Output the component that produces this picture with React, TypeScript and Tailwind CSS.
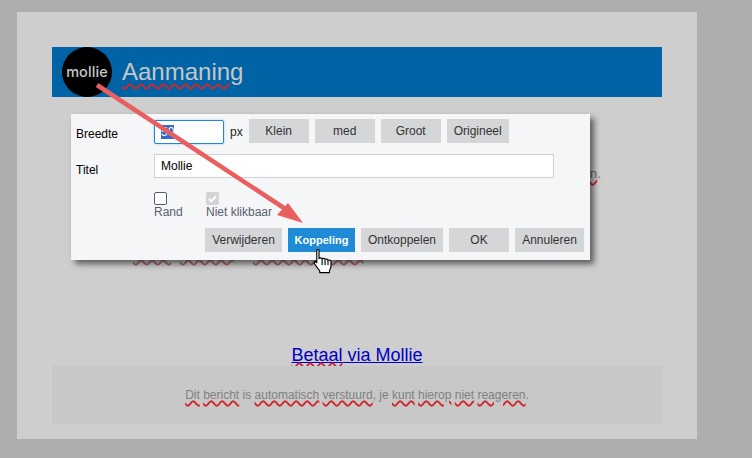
const btn = "h-6 bg-[#d5d6d8] text-[#333333] text-[12px] flex items-center justify-center";
const wave = "underline decoration-wavy decoration-[#d0262c] decoration-[1.5px]";
const dimWave = "underline decoration-wavy decoration-[#b06a6a] decoration-[1.5px] underline-offset-[3px]";

export default function App() {
  return (
    <div className="relative w-[752px] h-[458px] overflow-hidden bg-[#aeaeae] pt-[12px] pl-[17px] font-['Liberation_Sans',Arial,sans-serif]">
      <div className="w-[680px] h-[427px] bg-[#cecece] px-[35px] pt-[35px] flex flex-col">
        <div className="h-[50px] shrink-0 bg-[#0063a5] flex items-center pl-[10px] gap-[10px]">
          <div className="w-[50px] h-[50px] rounded-full bg-black flex items-center justify-center text-[#c8c8c8] text-[14.5px] font-medium font-['Inter',sans-serif] tracking-[0.1px]">mollie</div>
          <div className={`text-[24px] text-[#c6c6c6] underline-offset-[3px] ${wave}`}>Aanmaning</div>
        </div>
        <div className="h-[84px] shrink-0 flex items-end justify-end pr-[61px] text-[13.5px] text-[#6d6d6d] leading-[15px]">
          <span className={wave}>n</span>.
        </div>
        <div className="h-[82px] shrink-0 pl-[81px] pt-[63px] flex text-[14px] leading-[15px] text-[#8a6d6d] whitespace-nowrap">
          <span className={`w-[47px] ${dimWave}`}>betaal</span>
          <span className={`w-[73px] ${dimWave}`}>rekening</span>
          <span className={dimWave}>betalingsopdracht</span>
        </div>
        <div className="flex-1 flex items-end justify-center">
          <a className="text-[18px] leading-[21px] text-[#0000c8] underline">
            <span className={wave}>Betaal</span> via Mollie
          </a>
        </div>
        <div className="h-[58px] shrink-0 mb-[15px] bg-[#c8c8c8] flex items-center justify-center text-[12px] text-[#808080]">
          <span>
            <span className={wave}>Dit</span> <span className={wave}>bericht</span> is{" "}
            <span className={wave}>automatisch</span> <span className={wave}>verstuurd</span>, je{" "}
            <span className={wave}>kunt</span> <span className={wave}>hierop</span> <span className={wave}>niet</span>{" "}
            <span className={wave}>reageren</span>.
          </span>
        </div>
      </div>

      <div className="absolute left-[71px] top-[114px] w-[519px] h-[146px] bg-[#f5f6f8] shadow-[4px_4px_6px_rgba(0,0,0,0.55)] pt-[5px] pl-[5px] pr-[6px] text-[12px] text-black flex flex-col">
        <div className="flex items-start h-6">
          <div className="w-[78px] h-[30px] flex items-center">Breedte</div>
          <div className="w-[70px] h-6 mt-[1px] bg-white border border-[#1e88d6] rounded-[2px] pl-[6px] flex items-center shadow-[0_0_2px_rgba(30,136,214,0.5)]">
            <span className="bg-[#3367d1] text-white leading-[14px]">50</span>
          </div>
          <div className="ml-[6px] mt-[1px] h-6 flex items-center text-[#222222]">px</div>
          <div className="ml-[6px] flex gap-[6px]">
            <div className={`${btn} w-[60px]`}>Klein</div>
            <div className={`${btn} w-[60px]`}>med</div>
            <div className={`${btn} w-[60px]`}>Groot</div>
            <div className={`${btn} w-[62px]`}>Origineel</div>
          </div>
        </div>
        <div className="flex items-start mt-[11px]">
          <div className="w-[78px] h-[32px] flex items-center">Titel</div>
          <div className="w-[400px] h-6 bg-white border border-[#d0d2d6] pl-[6px] flex items-center">Mollie</div>
        </div>
        <div className="flex mt-[6px] pl-[78px] text-[#595e6e]">
          <div className="w-[52px] flex flex-col">
            <div className="w-[13px] h-[13px] bg-white border border-[#595e6e] rounded-[2px]" />
            <span className="leading-[14px]">Rand</span>
          </div>
          <div className="flex flex-col">
            <div className="w-[13px] h-[13px] bg-[#d3d3d3] rounded-[2px] flex items-center justify-center">
              <svg width="9" height="8" viewBox="0 0 9 8" fill="none">
                <path d="M1 4 L3.4 6.4 L8 1.2" stroke="#ffffff" strokeWidth="2" />
              </svg>
            </div>
            <span className="leading-[14px]">Niet klikbaar</span>
          </div>
        </div>
        <div className="flex justify-end gap-[6px] mt-[9px]">
          <div className={`${btn} w-[77px]`}>Verwijderen</div>
          <div className="h-6 w-[67px] bg-[#1f8ad6] text-white font-bold text-[11px] flex items-center justify-center">Koppeling</div>
          <div className={`${btn} w-[82px]`}>Ontkoppelen</div>
          <div className={`${btn} w-[60px]`}>OK</div>
          <div className={`${btn} w-[69px]`}>Annuleren</div>
        </div>
      </div>

      <svg className="absolute left-0 top-0 pointer-events-none" width="752" height="458" viewBox="0 0 752 458" fill="none">
        <path d="M97 85 L290 212" stroke="#e95e5e" strokeWidth="4.5" />
        <path d="M303 223 L277 215 L288 203 Z" fill="#e95e5e" />
      </svg>

      <svg className="absolute left-[313px] top-[249px] pointer-events-none" width="20" height="25" viewBox="0 0 17 22">
        <path
          d="M3 1.2 C3 .4 5 .4 5 1.2 V8.5 C5.3 7.6 7.5 7.6 7.7 8.8 C8 8 10.1 8 10.3 9.2 C10.7 8.6 12.7 8.7 12.9 10 C13.3 9.5 15.5 9.6 15.5 11 V15.5 C15.5 17 14.7 18 14.2 19 V20.8 H5.6 V19.2 C4.5 17.8 3.3 16.2 1.2 13.2 C.2 11.7 1.8 10.6 3 12 Z"
          fill="#ffffff"
          stroke="#000000"
          strokeWidth="1"
          strokeLinejoin="round"
        />
        <path d="M7.7 9 V14 M10.3 9.5 V14 M12.9 10.2 V14" stroke="#000000" strokeWidth="1" />
      </svg>
    </div>
  );
}
